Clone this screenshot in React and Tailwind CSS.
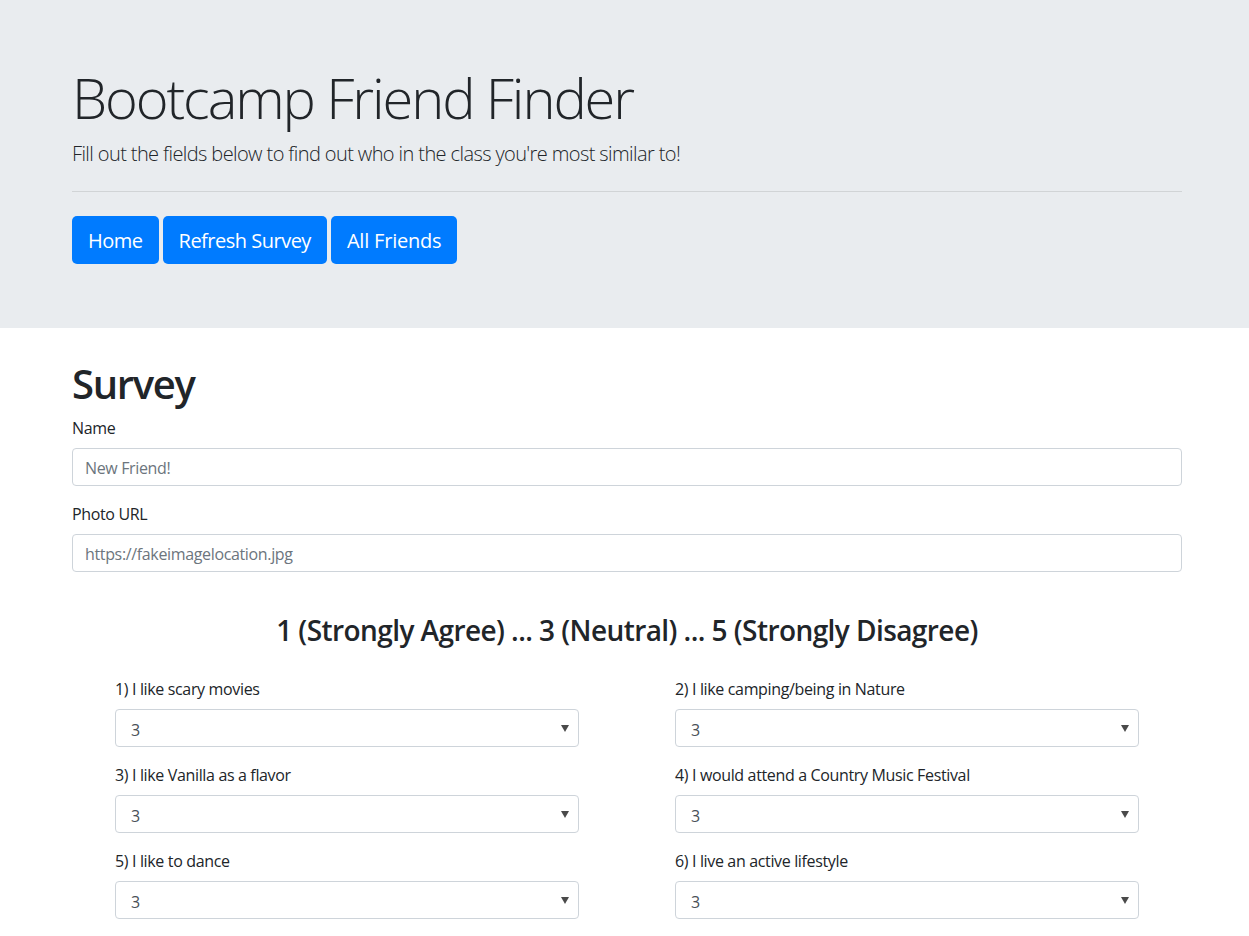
import React from 'react';

const questions = [
    '1) I like scary movies',
    '2) I like camping/being in Nature',
    '3) I like Vanilla as a flavor',
    '4) I would attend a Country Music Festival',
    '5) I like to dance',
    '6) I live an active lifestyle',
];

const SelectBox = () => (
    <div className="relative h-[38px] w-full rounded-[4px] border border-[#ced4da] bg-white">
        <span className="absolute left-[15px] top-[10px] text-[16px] leading-[20px] text-[#495057]">3</span>
        <svg className="absolute right-[9px] top-[15px] h-[7px] w-[8px]" viewBox="0 0 8 7">
            <path d="M0 0h8L4 7z" fill="#4a4a4a" />
        </svg>
    </div>
);

export default function App() {
    return (
        <div className="min-h-screen bg-white text-[#212529] tracking-[-0.35px]" style={{ fontFamily: '"Open Sans", "Noto Sans", sans-serif' }}>
            {/* Jumbotron */}
            <div className="bg-[#e9ecef] pt-[64px] pb-[64px]">
                <div className="ml-[72px] w-[1110px]">
                    <h1 className="text-[56px] font-light leading-[67px] tracking-[-2.1px]">Bootcamp Friend Finder</h1>
                    <p className="mt-[8px] text-[20px] font-light leading-[30px] tracking-[-0.6px]">
                        Fill out the fields below to find out who in the class you're most similar to!
                    </p>
                    <hr className="mt-[22px] mb-[24px] border-t border-[rgba(0,0,0,0.1)]" />
                    <div className="flex gap-[4px]">
                        <button className="h-[48px] rounded-[5px] bg-[#007bff] px-[16px] pt-[2px] text-[20px] leading-[30px] tracking-[-0.5px] text-white">Home</button>
                        <button className="h-[48px] rounded-[5px] bg-[#007bff] px-[16px] pt-[2px] text-[20px] leading-[30px] tracking-[-0.5px] text-white">Refresh Survey</button>
                        <button className="h-[48px] rounded-[5px] bg-[#007bff] px-[16px] pt-[2px] text-[20px] leading-[30px] tracking-[-0.2px] text-white">All Friends</button>
                    </div>
                </div>
            </div>

            {/* Survey */}
            <div className="ml-[72px] w-[1110px] pt-[32px]">
                <h1 className="mb-[8px] text-[40px] font-semibold leading-[48px] tracking-[-1.3px]">Survey</h1>
                <div className="mb-[16px]">
                    <label className="mb-[8px] block text-[16px] leading-[24px]">Name</label>
                    <div className="flex h-[38px] items-center rounded-[4px] border border-[#ced4da] bg-white px-[12px] pt-[2px] text-[16px] text-[#6c757d]">
                        New Friend!
                    </div>
                </div>
                <div className="mb-[16px]">
                    <label className="mb-[8px] block text-[16px] leading-[24px]">Photo URL</label>
                    <div className="flex h-[38px] items-center rounded-[4px] border border-[#ced4da] bg-white px-[12px] pt-[2px] text-[16px] text-[#6c757d]">
                        https://fakeimagelocation.jpg
                    </div>
                </div>

                <h3 className="mt-[41px] text-center text-[28px] font-semibold leading-[34px] tracking-[-0.57px]">
                    1 (Strongly Agree) ... 3 (Neutral) ... 5 (Strongly Disagree)
                </h3>

                <div className="mt-[30px] ml-[43px] grid w-[1024px] grid-cols-2 gap-x-[96px] gap-y-[16px]">
                    {questions.map((q) => (
                        <div key={q}>
                            <label className="mb-[8px] block text-[16px] leading-[24px]">{q}</label>
                            <SelectBox />
                        </div>
                    ))}
                </div>
            </div>
        </div>
    );
}
